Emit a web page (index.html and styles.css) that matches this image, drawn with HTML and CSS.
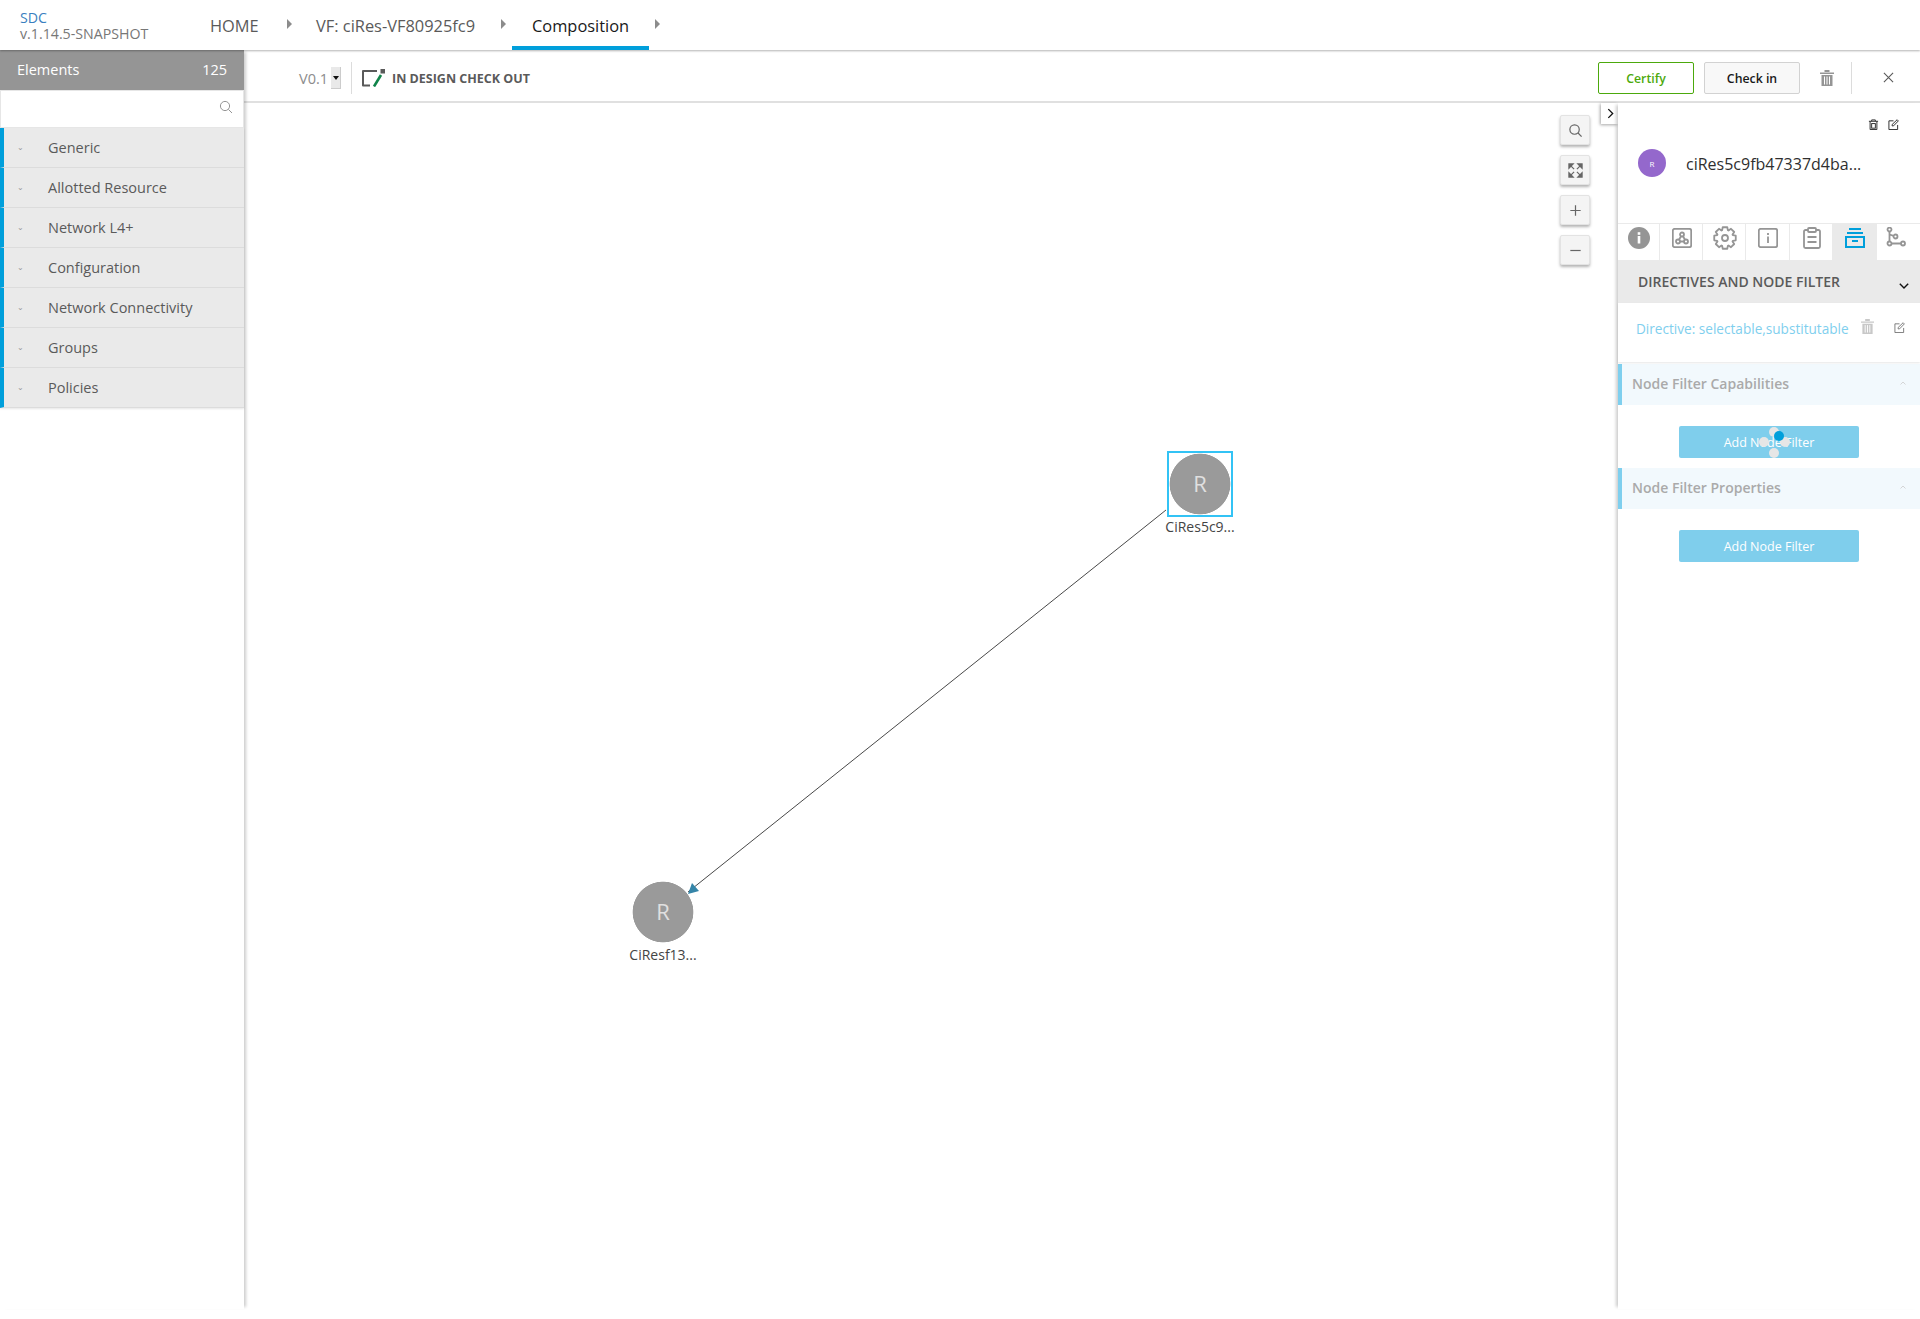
FILE: index.html
```html
<!DOCTYPE html>
<html lang="en">
<head>
<meta charset="utf-8">
<title>SDC Composition</title>
<link rel="stylesheet" href="styles.css">
</head>
<body>
<header class="topbar">
  <div class="brand"><div class="brand-name">SDC</div><div class="brand-version">v.1.14.5-SNAPSHOT</div></div>
  <nav class="crumbs">
    <a class="crumb crumb-home">HOME</a><span class="caret"></span>
    <a class="crumb crumb-vf">VF: ciRes-VF80925fc9</a><span class="caret"></span>
    <a class="crumb crumb-active">Composition</a><span class="caret"></span>
  </nav>
</header>
<div class="workspace">
  <aside class="palette">
    <div class="palette-head"><span>Elements</span><span>125</span></div>
    <div class="palette-search">
      <svg class="search-icon" viewBox="0 0 14 14"><circle cx="6" cy="6" r="4.6"/><path d="M9.4 9.4 13 13"/></svg>
    </div>
    <ul class="groups">
      <li><i>⌄</i>Generic</li>
      <li><i>⌄</i>Allotted Resource</li>
      <li><i>⌄</i>Network L4+</li>
      <li><i>⌄</i>Configuration</li>
      <li><i>⌄</i>Network Connectivity</li>
      <li><i>⌄</i>Groups</li>
      <li><i>⌄</i>Policies</li>
    </ul>
  </aside>
  <main class="content">
    <div class="toolbar">
      <span class="version">V0.1</span>
      <span class="select-arrow"></span>
      <span class="vdiv"></span>
      <svg class="status-icon" viewBox="0 0 24 18">
        <path class="st-frame" d="M16 2H2v14.500h7"/>
        <rect class="st-dot" x="19.500" y="0" width="4.500" height="4.500"/>
        <path class="st-pen" d="M13 17.500 20 6"/>
      </svg>
      <span class="status-text">IN DESIGN CHECK OUT</span>
      <span class="spacer"></span>
      <button class="btn btn-certify">Certify</button>
      <button class="btn btn-checkin">Check in</button>
      <svg class="tb-trash" viewBox="0 0 14 16"><path d="M0 2.500h14v1.500H0zM4.500 0h5v2h-5zM1.500 5h11v11h-11z"/><path class="cut" d="M4.500 6.500v8M7 6.500v8M9.500 6.500v8"/></svg>
      <span class="vdiv vdiv-right"></span>
      <svg class="tb-close" viewBox="0 0 12 12"><path d="M1 1l10 10M11 1 1 11"/></svg>
    </div>
    <div class="stage">
      <section class="canvas">
        <svg class="edge" viewBox="0 0 1000 600">
          <path class="edge-line" d="M478 6 0 388"/>
          <path class="edge-head" d="M0 390 4 379 11 387z"/>
        </svg>
        <div class="node node-a"><span class="node-ring">R</span><span class="node-label">CiRes5c9...</span></div>
        <div class="node node-b"><span class="node-ring">R</span><span class="node-label">CiResf13...</span></div>
        <div class="zoombar">
          <button class="zbtn"><svg viewBox="0 0 16 16"><circle cx="7" cy="7" r="5"/><path d="M10.700 10.700 14.500 14.500"/></svg></button>
          <button class="zbtn"><svg viewBox="0 0 16 16"><path d="M1 5.500V1h4.500L1 5.500zM15 5.500V1h-4.500L15 5.500zM1 10.500V15h4.500L1 10.500zM15 10.500V15h-4.500l4.500-4.500z"/><path d="M3 3l3.500 3.500M13 3 9.500 6.500M3 13l3.500-3.500M13 13 9.500 9.500"/></svg></button>
          <button class="zbtn"><svg viewBox="0 0 16 16"><path d="M8 2.500v11M2.500 8h11"/></svg></button>
          <button class="zbtn"><svg viewBox="0 0 16 16"><path d="M2.500 8h11"/></svg></button>
        </div>
        <button class="collapse"><svg viewBox="0 0 8 12"><path d="M1.500 1 6.500 6l-5 5"/></svg></button>
      </section>
      <aside class="panel">
        <div class="panel-actions">
          <svg class="pa-icon" viewBox="0 0 12 12"><path d="M1 2.500h10M4 2.500V1h4v1.500M2.300 2.500v9h7.400v-9"/><rect x="4" y="5" width="4" height="5"/></svg>
          <svg class="pa-icon" viewBox="0 0 12 12"><path d="M6 2H1v9.500h9.500V6.500"/><path d="M4.500 6 10 .8l1.300 1.300L6 7.500H4.500z"/></svg>
        </div>
        <div class="panel-title">
          <span class="avatar">R</span>
          <span class="title-text">ciRes5c9fb47337d4ba...</span>
        </div>
        <div class="tabs">
          <div class="tab tab-1"><svg viewBox="0 0 22 22"><circle class="fill" cx="11" cy="11" r="11"/><rect class="knock" x="9.700" y="9" width="2.600" height="7.500"/><rect class="knock" x="9.700" y="5.200" width="2.600" height="2.600"/></svg></div>
          <div class="tab tab-2"><svg viewBox="0 0 20 20"><rect x=".8" y=".8" width="18.400" height="18.400" rx="2"/><circle cx="10" cy="6.500" r="2"/><circle cx="6" cy="13.500" r="2"/><circle cx="14" cy="13.500" r="2"/><path d="M9 8.300 7 11.700M11 8.300l2 3.400M8 13.500h4"/></svg></div>
          <div class="tab tab-3"><svg viewBox="0 0 24 24"><circle cx="12" cy="12" r="3"/><path d="M9.710 1.240H14.290L14.840 4.200 15.510 4.480 17.990 2.770 21.230 6.010 19.520 8.490 19.800 9.160 22.760 9.710V14.290L19.800 14.840 19.520 15.510 21.230 17.990 17.990 21.230 15.510 19.520 14.840 19.800 14.290 22.760H9.710L9.160 19.800 8.490 19.520 6.010 21.230 2.770 17.990 4.480 15.510 4.200 14.840 1.240 14.290V9.710L4.200 9.160 4.480 8.490 2.770 6.010 6.010 2.770 8.490 4.480 9.160 4.200z"/></svg></div>
          <div class="tab tab-4"><svg viewBox="0 0 20 20"><rect x=".8" y=".8" width="18.400" height="18.400" rx="2"/><path d="M10 8.500v6.500M10 5v2"/></svg></div>
          <div class="tab tab-5"><svg viewBox="0 0 18 22"><path d="M5 3H2.500A1.500 1.500 0 0 0 1 4.500v15A1.500 1.500 0 0 0 2.500 21h13a1.500 1.500 0 0 0 1.500-1.500v-15A1.500 1.500 0 0 0 15.500 3H13"/><rect x="5" y="1" width="8" height="4" rx="1"/><path d="M4.500 10h9M4.500 15h9"/></svg></div>
          <div class="tab tab-6 tab-on"><svg viewBox="0 0 20 20"><path d="M4 1h12M2 5h16"/><rect x="1" y="9" width="18" height="10"/><path d="M7 13h6"/></svg></div>
          <div class="tab tab-7"><svg viewBox="0 0 20 20"><circle cx="3.500" cy="2.500" r="2"/><circle cx="3.500" cy="16.500" r="2"/><circle cx="9.500" cy="9.500" r="2"/><circle cx="17" cy="16.500" r="2"/><path d="M3.500 4.500v10M5.500 16.500h9.500M3.500 7.500l4.200 1.300"/></svg></div>
        </div>
        <div class="section-head"><span>DIRECTIVES AND NODE FILTER</span><svg class="sec-chev" viewBox="0 0 10 6"><path d="M.8.800 5 5 9.200.800"/></svg></div>
        <div class="directive">
          <span class="directive-text">Directive: selectable,substitutable</span>
          <svg class="dir-trash" viewBox="0 0 14 16"><path d="M0 2.500h14v1.500H0zM4.500 0h5v2h-5zM1.500 5h11v11h-11z"/><path class="cut" d="M4.500 6.500v8M7 6.500v8M9.500 6.500v8"/></svg>
          <svg class="dir-edit" viewBox="0 0 12 12"><path d="M6 2H1v9.500h9.500V6.500"/><path d="M4.500 6 10 .8l1.300 1.300L6 7.500H4.500z"/></svg>
        </div>
        <div class="sub-head"><span>Node Filter Capabilities</span><svg class="sub-chev" viewBox="0 0 6 4"><path d="M.5 3.500 3 1l2.500 2.500"/></svg></div>
        <div class="add-row add-spin">
          <button class="add-btn">Add Node Filter</button>
          <div class="spinner"><i class="s1"></i><i class="s2"></i><i class="s3"></i><i class="s4"></i><i class="s5"></i></div>
        </div>
        <div class="sub-head"><span>Node Filter Properties</span><svg class="sub-chev" viewBox="0 0 6 4"><path d="M.5 3.500 3 1l2.500 2.500"/></svg></div>
        <div class="add-row">
          <button class="add-btn">Add Node Filter</button>
        </div>
      </aside>
    </div>
  </main>
</div>
</body>
</html>
```
FILE: styles.css
```css
* { box-sizing: border-box; }
html, body { margin: 0; height: 100%; }
body { font-family: "Open Sans", sans-serif; color: #5a5a5a; background: #fff; overflow: hidden; display: flex; flex-direction: column; }
button { font-family: inherit; }

.topbar { height: 50px; flex: none; display: flex; align-items: stretch; background: #fff; position: relative; z-index: 3; box-shadow: 0 1px 2px rgba(0,0,0,.3); }
.brand { width: 210px; padding: 10px 0 0 20px; font-size: 14.2px; line-height: 18px; }
.brand-name { color: #3a7fc0; line-height: 15px; }
.brand-version { color: #777; line-height: 17px; white-space: nowrap; }
.crumbs { display: flex; align-items: stretch; font-size: 16.4px; }
.crumb { line-height: 52px; padding: 0; color: #5a5a5a; height: 50px; }
.crumb-home { width: 77px; }
.crumb-vf { flex: 0 0 auto; white-space: nowrap; width: 171px; }
.crumb-active { color: #191919; padding: 0 20px; font-weight: 400; border-bottom: 4px solid #009fdb; width: 137px; white-space: nowrap; }
.caret { width: 0; height: 0; border-left: 5px solid #8c8c8c; border-top: 5px solid transparent; border-bottom: 5px solid transparent; align-self: flex-start; margin-top: 19px; }
.crumb-home + .caret { margin-right: 24px; }
.crumb-vf + .caret { margin-left: 14px; margin-right: 6px; }
.crumb-active + .caret { margin-left: 6px; }

.workspace { flex: 1; display: flex; min-height: 0; padding-bottom: 10px; }
.palette { width: 244px; flex: none; background: #fff; position: relative; z-index: 2; box-shadow: 4px 0 3px -2px rgba(0,0,0,.2); }
.palette-head { height: 40px; background: #959595; color: #fff; font-size: 14.5px; font-weight: 400; display: flex; justify-content: space-between; align-items: center; padding: 0 17px 1px; }
.palette-search { height: 38px; background: #fff; border: 1px solid #e6e6e6; position: relative; display: flex; justify-content: flex-end; align-items: center; padding: 0 10px 4px 0; }
.search-icon { width: 14px; height: 14px; fill: none; stroke: #959595; stroke-width: 1; }
.groups { list-style: none; margin: 0; padding: 0; box-shadow: 0 1px 2px rgba(0,0,0,.1); }
.groups li { height: 40px; line-height: 39px; background: #eaeaea; border-left: 4px solid #009fdb; border-bottom: 1px solid #dcdcdc; font-size: 14.5px; color: #5a5a5a; padding-left: 44px; position: relative; }
.groups li i { position: absolute; left: 13px; top: -1px; font-size: 8px; font-style: normal; color: #999; }

.content { flex: 1; min-width: 0; display: flex; flex-direction: column; }
.toolbar { height: 53px; flex: none; border-bottom: 2px solid #e0e0e0; display: flex; align-items: center; padding: 4px 26px 0 55px; background: #fff; }
.version { font-size: 14.5px; color: #8c8c8c; width: 32px; margin-top: 2px; }
.select-arrow { width: 10px; height: 22px; background: #e9e9e9; border: 1px solid #ccc; border-width: 0 1px 1px 0; position: relative; }
.select-arrow::after { content: ""; position: absolute; left: 1.500px; top: 9px; border-top: 4px solid #111; border-left: 3px solid transparent; border-right: 3px solid transparent; }
.vdiv { width: 1px; height: 32px; background: #dcdcdc; margin: 0 9px 0 10px; }
.status-icon { width: 24px; height: 18px; margin-right: 7px; }
.st-frame { fill: none; stroke: #5a5a5a; stroke-width: 2; stroke-linejoin: round; }
.st-dot { fill: #5a5a5a; }
.st-pen { fill: none; stroke: #10844a; stroke-width: 2.600; }
.status-text { font-size: 12.5px; font-weight: 700; color: #5a5a5a; margin-top: 2px; }
.spacer { flex: 1; }
.btn { width: 96px; height: 32px; border-radius: 2px; font-size: 12.3px; font-weight: 600; margin-left: 10px; padding: 1px 0 0; }
.btn-certify { background: #fff; color: #4ca90c; border: 1px solid #4ca90c; }
.btn-checkin { background: #f8f8f8; color: #191919; border: 1px solid #d2d2d2; }
.tb-trash { width: 14px; height: 16px; margin-left: 20px; fill: #959595; }
.cut { fill: none; stroke: #fff; stroke-width: 1; }
.vdiv-right { margin: 0 0 0 17px; }
.tb-close { width: 11px; height: 11px; margin-left: 31px; fill: none; stroke: #5a5a5a; stroke-width: 1.200; }

.stage { flex: 1; display: flex; min-height: 0; }
.canvas { flex: 1; position: relative; min-width: 0; }
.edge { position: absolute; left: 444px; top: 401px; width: 1000px; height: 600px; overflow: visible; }
.edge-line { fill: none; stroke: #333; stroke-width: .9; }
.edge-head { fill: #3585a8; }
.node { position: absolute; width: 90px; display: flex; flex-direction: column; align-items: center; }
.node-a { left: 911px; top: 348px; }
.node-b { left: 374px; top: 776px; }
.node-ring { width: 66px; height: 66px; display: flex; align-items: center; justify-content: center; font-size: 22px; color: #e0e0e0; padding-bottom: 2px; background: radial-gradient(circle, #9a9a9a 0 30px, transparent 30.700px); }
.node-a .node-ring { border: 2px solid #33c3f5; }
.node-label { font-size: 14px; line-height: 18px; color: #444; margin-top: 1px; white-space: nowrap; }
.zoombar { position: absolute; left: 1316px; top: 12px; display: flex; flex-direction: column; gap: 10px; }
.zbtn { width: 30px; height: 30px; padding: 0; background: #f4f4f4; border: 1px solid #e3e3e3; border-radius: 2px; box-shadow: 0 2px 3px rgba(0,0,0,.3); display: flex; align-items: center; justify-content: center; }
.zbtn svg { width: 15px; height: 15px; fill: none; stroke: #666; stroke-width: 1.300; }
.zbtn:nth-child(2) svg { fill: #666; }
.collapse { position: absolute; right: 0; top: 0; width: 17px; height: 21px; padding: 0 0 0 2px; background: #fff; border: 0; box-shadow: -1px 1px 3px rgba(0,0,0,.35); display: flex; align-items: center; justify-content: center; }
.collapse svg { width: 7px; height: 11px; fill: none; stroke: #111; stroke-width: 1.500; }

.panel { width: 302px; flex: none; background: #fff; box-shadow: -4px 0 3px -2px rgba(0,0,0,.2); position: relative; z-index: 1; }
.panel-actions { height: 46px; display: flex; justify-content: flex-end; gap: 9px; padding: 16px 21px 0 0; }
.pa-icon { width: 11px; height: 11px; fill: none; stroke: #222; stroke-width: 1; }
.panel-title { height: 74px; display: flex; align-items: flex-start; padding-left: 20px; }
.avatar { width: 28px; height: 28px; border-radius: 50%; background: #9468cc; color: #fff; font-size: 8px; display: flex; align-items: center; justify-content: center; }
.title-text { font-size: 16px; color: #2f2f2f; margin-left: 20px; line-height: 28px; margin-top: 1px; white-space: nowrap; }
.tabs { height: 38px; display: flex; border-top: 1px solid #eaeaea; border-bottom: 1px solid #eaeaea; }
.tab { border-right: 1px solid #eaeaea; display: flex; justify-content: center; padding-top: 4px; }
.tab svg { width: 20px; height: 20px; fill: none; stroke: #959595; stroke-width: 1.800; }
.tab-1 { width: 42px; padding-top: 3px; }
.tab-1 svg { width: 22px; height: 22px; }
.tab-2, .tab-3 { width: 43px; padding-left: 2px; }
.tab-3 { padding-top: 2px; }
.tab-3 svg { width: 24px; height: 24px; stroke-linejoin: round; }
.tab-4 { width: 44px; }
.tab-5 { width: 43px; padding: 3px 0 0 2px; }
.tab-5 svg { width: 18px; height: 22px; }
.tab-6 { width: 44px; }
.tab-7 { flex: 1; border-right: 0; padding-right: 6px; }
.tab-7 svg { margin-top: -1px; }
.fill { fill: #959595; stroke: none; }
.knock { fill: #fff; stroke: none; }
.tab-on { background: #eaeaea; }
.tab-on svg { stroke: #009fdb; stroke-width: 2; }
.section-head { height: 42px; background: #eaeaea; display: flex; align-items: center; justify-content: space-between; padding: 0 11px 2px 20px; font-size: 14px; font-weight: 600; color: #5a5a5a; }
.sec-chev { width: 10px; height: 6px; fill: none; stroke: #111; stroke-width: 1.400; margin-top: 10px; }
.directive { height: 59px; display: flex; align-items: flex-start; padding: 16px 0 0 18px; position: relative; box-shadow: 0 1px 2px rgba(0,0,0,.1); }
.directive-text { font-size: 13.6px; color: #7fcfee; line-height: 20px; white-space: nowrap; }
.dir-trash { width: 13px; height: 15px; fill: #c8c8c8; position: absolute; right: 46px; top: 16px; }
.dir-edit { width: 11px; height: 11px; fill: none; stroke: #666; stroke-width: .9; position: absolute; right: 15px; top: 19px; }
.sub-head { margin-top: 2px; height: 41px; background: #f2f9fd; border-left: 4px solid #7fcfee; display: flex; align-items: center; justify-content: space-between; padding: 0 14px 2px 10px; font-size: 14px; font-weight: 600; color: #aaa; }
.sub-chev { width: 6px; height: 4px; fill: none; stroke: #ccc; stroke-width: .8; margin-top: -1px; }
.add-row { height: 63px; display: flex; justify-content: center; padding-top: 21px; position: relative; }
.add-btn { width: 180px; height: 32px; background: #7fceec; color: #fff; border: 0; border-radius: 2px; font-size: 12.5px; padding: 0; }
.add-spin + .sub-head { margin-top: 0; }
.spinner { position: absolute; left: 151px; top: 21px; width: 30px; height: 34px; }
.spinner i { position: absolute; width: 10px; height: 10px; border-radius: 50%; background: #e6e6e6; }
.s1 { left: 0; top: 1px; }
.s2 { left: 0; top: 22px; }
.s3 { left: -10px; top: 11px; }
.s4 { left: 11px; top: 11px; }
.spinner .s5 { left: 5px; top: 5px; background: #009fdb; }
```
